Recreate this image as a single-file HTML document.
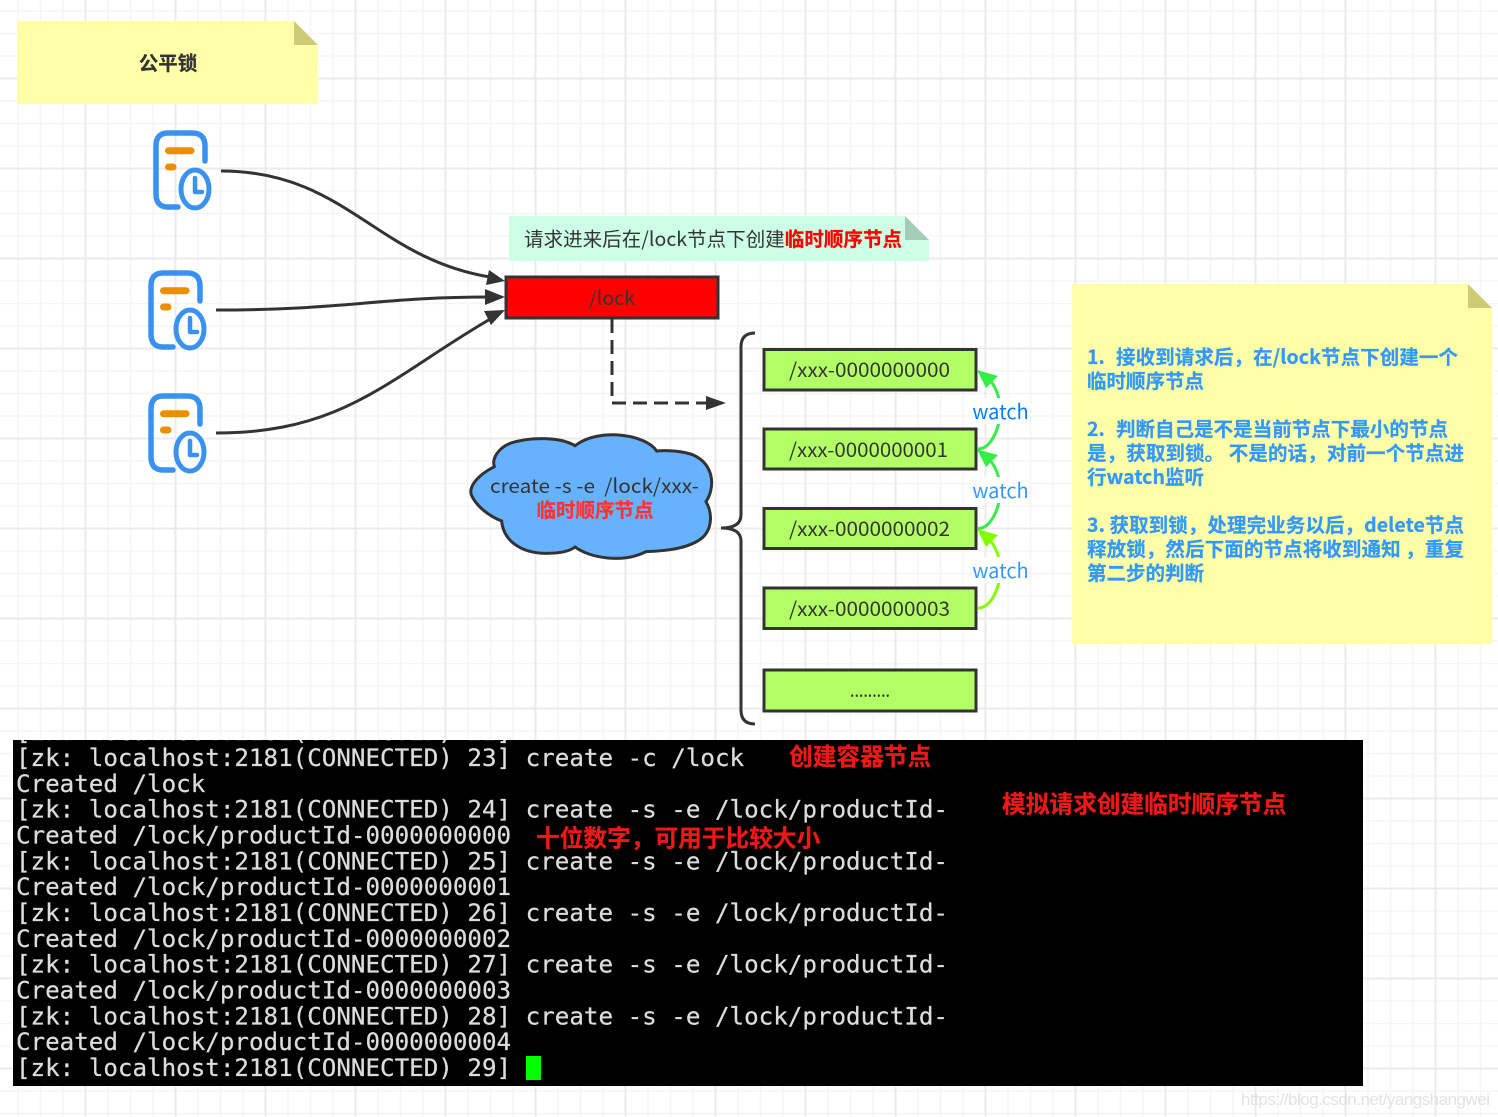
<!DOCTYPE html>
<html lang="zh-CN">
<head>
<meta charset="utf-8">
<title>公平锁</title>
<style>
html,body{margin:0;padding:0;background:#fff;width:1498px;height:1117px;overflow:hidden}
svg{display:block}
.n{font-family:"Noto Sans CJK SC","Liberation Sans",sans-serif;fill:#333;font-size:19.5px}
.b{font-weight:700;stroke:currentColor;stroke-width:.25px}
.m{font-family:"DejaVu Sans Mono","Liberation Mono",monospace;font-size:24.2px;fill:#dcdcdc;stroke:#dcdcdc;stroke-width:.25px}
.box{fill:#b3ff66;stroke:#333;stroke-width:3}
.red{fill:#ee1818;font-family:"Noto Sans CJK SC",sans-serif;font-weight:700;font-size:23.7px;stroke:#ee1818;stroke-width:.3px}
.w{font-family:"Noto Sans CJK SC",sans-serif;font-size:20px;text-anchor:middle}
.y{fill:#3399ff;color:#3399ff}
</style>
</head>
<body>
<svg width="1498" height="1117" viewBox="0 0 1498 1117" xmlns="http://www.w3.org/2000/svg">
<defs>
<pattern id="grid" width="90" height="90" patternUnits="userSpaceOnUse" patternTransform="translate(-4.5,-11.5)">
<path d="M22.5 0V90M45 0V90M67.5 0V90M0 22.5H90M0 45H90M0 67.5H90" stroke="#f5f5f5" stroke-width="1.5" fill="none"/>
<path d="M90 0V90M0 90H90M0 0V90M0 0H90" stroke="#ebebeb" stroke-width="2" fill="none"/>
</pattern>
<clipPath id="term"><rect x="13" y="740" width="1350" height="346"/></clipPath>
<g id="icon" fill="none" stroke-linecap="round" stroke-linejoin="round">
<path d="M205 161V146Q205 133 192 133H168Q156 133 156 146V194Q156 207 168 207H178" stroke="#3a92f0" stroke-width="5.500"/>
<ellipse cx="195" cy="189" rx="14" ry="19" stroke="#3a92f0" stroke-width="5"/>
<path d="M195 178V192H202" stroke="#3a92f0" stroke-width="4.500"/>
<path d="M168.500 150.700H191" stroke="#ea9000" stroke-width="7"/>
<path d="M168.500 167H173" stroke="#ea9000" stroke-width="7"/>
</g>
</defs>

<rect width="1498" height="1117" fill="#fff"/>
<rect width="1498" height="1117" fill="url(#grid)"/>

<!-- title note -->
<path d="M17 21H294L318 45V104H17Z" fill="#ffffa8"/>
<path d="M294 21L318 45H294Z" fill="#cccc77"/>
<text class="n b" x="168" y="70" text-anchor="middle" style="color:#333">公平锁</text>

<!-- request icons -->
<use href="#icon"/>
<use href="#icon" transform="translate(-5,140)"/>
<use href="#icon" transform="translate(-5,263)"/>

<!-- connectors -->
<g fill="none" stroke="#333" stroke-width="3">
<path d="M221 171C345 171 375 258 490 277"/>
<path d="M216 310C345 310 380 297 490 297"/>
<path d="M216 433C345 433 390 377 492 318"/>
</g>
<g fill="#333">
<path d="M505 281L486 285L489 270Z"/>
<path d="M505 297L485 305V289Z"/>
<path d="M505 310L491 325L484 311Z"/>
</g>

<!-- green note -->
<path d="M509 216H905L929 240V261H509Z" fill="#ccffe6"/>
<path d="M905 216L929 240H905Z" fill="#a3ccb8"/>
<text class="n" x="524" y="246" textLength="378">请求进来后在/lock节点下创建<tspan fill="#ff0000" font-weight="700" stroke="#ff0000" stroke-width=".25">临时顺序节点</tspan></text>

<!-- lock box -->
<rect x="506" y="277" width="212" height="41" fill="#ff0000" stroke="#333" stroke-width="3"/>
<text class="n" x="612" y="305" text-anchor="middle" font-size="20">/lock</text>

<!-- dashed -->
<path d="M612 319V403H708" fill="none" stroke="#333" stroke-width="3" stroke-dasharray="14 7"/>
<path d="M726 403L706 410V396Z" fill="#333"/>

<!-- brace -->
<path d="M755 333Q741 333 741 347V515Q741 528 721 528Q741 528 741 541V710Q741 724 755 724" fill="none" stroke="#333" stroke-width="3"/>

<!-- cloud -->
<g transform="translate(460,425) scale(.3333)">
<path d="M103 125C45 155 25 190 35 212C50 245 90 275 125 288C130 345 180 385 260 385C300 385 330 378 345 366C390 400 490 415 558 380C620 378 700 370 735 330C755 305 758 265 738 230C765 190 765 120 700 90C670 78 620 75 590 78C560 30 420 5 345 62C300 35 210 35 150 55C115 70 95 100 103 125Z" fill="#66b2ff" stroke="#333" stroke-width="9"/>
</g>
<text class="n" x="490" y="493" textLength="209" lengthAdjust="spacingAndGlyphs" xml:space="preserve">create -s -e  /lock/xxx-</text>
<text class="n b" x="595" y="517" text-anchor="middle" style="fill:#ff3333;color:#ff3333">临时顺序节点</text>

<!-- green boxes -->
<rect class="box" x="764" y="349.500" width="212" height="40.500"/>
<rect class="box" x="764" y="429" width="212" height="40"/>
<rect class="box" x="764" y="508.500" width="212" height="40"/>
<rect class="box" x="764" y="588" width="212" height="40.500"/>
<rect class="box" x="764" y="670" width="212" height="41"/>
<text class="n" x="789" y="377" textLength="161" lengthAdjust="spacingAndGlyphs">/xxx-0000000000</text>
<text class="n" x="789" y="457" textLength="159" lengthAdjust="spacingAndGlyphs">/xxx-0000000001</text>
<text class="n" x="789" y="536" textLength="161" lengthAdjust="spacingAndGlyphs">/xxx-0000000002</text>
<text class="n" x="789" y="616" textLength="161" lengthAdjust="spacingAndGlyphs">/xxx-0000000003</text>
<text class="n" x="850" y="697" textLength="40" lengthAdjust="spacingAndGlyphs">.........</text>

<!-- watch arrows -->
<g fill="none" stroke-width="3">
<path d="M978 449C990 449 1000 430 1000 410C1000 396 995 385 988 378" stroke="#33ee44"/>
<path d="M978 528.500C990 528.500 1000 510 1000 490C1000 476 995 465 988 458" stroke="#33ee44"/>
<path d="M978 608C990 608 1000 590 1000 570C1000 556 995 545 988 538" stroke="#80ff00"/>
</g>
<path d="M977 370L998 376L986 388Z" fill="#33ee44"/>
<path d="M977 449.500L998 455L986 467Z" fill="#33ee44"/>
<path d="M977 529L998 535L986 547Z" fill="#80ff00"/>
<rect x="973" y="398" width="55" height="26" fill="#fff"/>
<rect x="973" y="477" width="55" height="26" fill="#fff"/>
<rect x="973" y="557" width="55" height="26" fill="#fff"/>
<text class="w" x="1000.500" y="419" fill="#007fff">watch</text>
<text class="w" x="1000.500" y="498" fill="#3399ff">watch</text>
<text class="w" x="1000.500" y="578" fill="#3399ff">watch</text>

<!-- explanation note -->
<path d="M1072 284H1468L1492 308V644H1072Z" fill="#ffffa8"/>
<path d="M1468 284L1492 308H1468Z" fill="#cccc77"/>
<text class="n b y" style="fill:#3399ff" x="1087" y="364">1.</text>
<text class="n b y" style="fill:#3399ff" x="1116" y="364" textLength="342">接收到请求后，在/lock节点下创建一个</text>
<text class="n b y" style="fill:#3399ff" x="1087" y="388">临时顺序节点</text>
<text class="n b y" style="fill:#3399ff" x="1087" y="436">2.</text>
<text class="n b y" style="fill:#3399ff" x="1116" y="436" textLength="332">判断自己是不是当前节点下最小的节点</text>
<text class="n b y" style="fill:#3399ff" x="1087" y="460" textLength="377">是，获取到锁。 不是的话，对前一个节点进</text>
<text class="n b y" style="fill:#3399ff" x="1087" y="484" textLength="117">行watch监听</text>
<text class="n b y" style="fill:#3399ff" x="1087" y="532" textLength="377">3. 获取到锁，处理完业务以后，delete节点</text>
<text class="n b y" style="fill:#3399ff" x="1087" y="556" textLength="377">释放锁，然后下面的节点将收到通知 ，重复</text>
<text class="n b y" style="fill:#3399ff" x="1087" y="580">第二步的判断</text>

<!-- terminal -->
<rect x="13" y="740" width="1350" height="346" fill="#000"/>
<g clip-path="url(#term)">
<text class="m" x="16" y="740.200" xml:space="preserve">[zk: localhost:2181(CONNECTED) 22] </text>
<text class="m" x="16" y="766" xml:space="preserve">[zk: localhost:2181(CONNECTED) 23] create -c /lock</text>
<text class="m" x="16" y="791.800">Created /lock</text>
<text class="m" x="16" y="817.700" xml:space="preserve">[zk: localhost:2181(CONNECTED) 24] create -s -e /lock/productId-</text>
<text class="m" x="16" y="843.500">Created /lock/productId-0000000000</text>
<text class="m" x="16" y="869.300" xml:space="preserve">[zk: localhost:2181(CONNECTED) 25] create -s -e /lock/productId-</text>
<text class="m" x="16" y="895.200">Created /lock/productId-0000000001</text>
<text class="m" x="16" y="921" xml:space="preserve">[zk: localhost:2181(CONNECTED) 26] create -s -e /lock/productId-</text>
<text class="m" x="16" y="946.800">Created /lock/productId-0000000002</text>
<text class="m" x="16" y="972.700" xml:space="preserve">[zk: localhost:2181(CONNECTED) 27] create -s -e /lock/productId-</text>
<text class="m" x="16" y="998.500">Created /lock/productId-0000000003</text>
<text class="m" x="16" y="1024.300" xml:space="preserve">[zk: localhost:2181(CONNECTED) 28] create -s -e /lock/productId-</text>
<text class="m" x="16" y="1050.200">Created /lock/productId-0000000004</text>
<text class="m" x="16" y="1076" xml:space="preserve">[zk: localhost:2181(CONNECTED) 29] </text>
</g>
<rect x="526" y="1056" width="15" height="24" fill="#00ff00"/>
<text class="red" x="789" y="765">创建容器节点</text>
<text class="red" x="1002" y="812.500">模拟请求创建临时顺序节点</text>
<text class="red" x="536" y="846.500">十位数字，可用于比较大小</text>

<!-- watermark -->
<text x="1241" y="1105" font-family="Liberation Sans, sans-serif" font-size="17" fill="#d8d8d8" fill-opacity=".75" textLength="249">https://blog.csdn.net/yangshangwei</text>
</svg>
</body>
</html>
